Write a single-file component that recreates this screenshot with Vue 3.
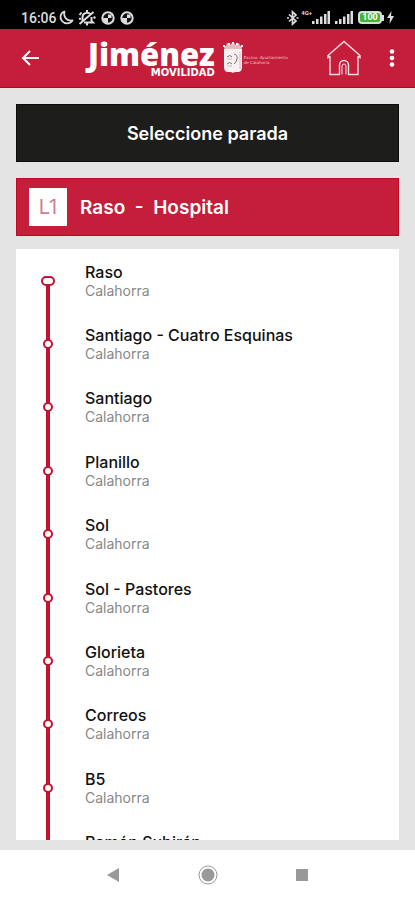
<script setup>
const stops = [
  'Raso',
  'Santiago - Cuatro Esquinas',
  'Santiago',
  'Planillo',
  'Sol',
  'Sol - Pastores',
  'Glorieta',
  'Correos',
  'B5',
  'Ramón Subirán'
]
</script>

<template>
  <div class="screen">
    <div class="status">
      <div class="group left">
        <span class="clock">16:06</span>
        <svg width="15" height="15" viewBox="0 0 15 15" fill="none" stroke="#ddd" stroke-width="1.8"><path d="M5.500 1.500C1 3 .5 8 3 11s7.500 3.500 10.500-.5C8 11.500 4 7 5.500 1.500Z" stroke-linejoin="round" /></svg>
        <svg class="bell" width="18" height="16" viewBox="0 0 18 16" fill="none" stroke="#ddd" stroke-width="2"><path d="M4.500 11V7.500a4.500 4.500 0 0 1 8-3M13.500 7v4l1.500 1.500H6M9 13v2.500M1.500 14 15.500 2M9 0v2.500M1.500 5l2-2.500M1 9l2-.5M15.500 7l2 1" /></svg>
        <svg class="dot" width="14" height="14" viewBox="0 0 14 14"><circle cx="7" cy="7" r="5.700" fill="#111" stroke="#ddd" stroke-width="2" /><path d="M7 7V3.500h3.500V7ZM2 7h5v5Q2 12 2 7Z" fill="#ddd" /></svg>
        <svg class="dot" width="14" height="14" viewBox="0 0 14 14"><circle cx="7" cy="7" r="5.700" fill="#111" stroke="#ddd" stroke-width="2" /><path d="M7 7V3.500h3.500V7ZM2 7h5v5Q2 12 2 7Z" fill="#ddd" /></svg>
      </div>
      <div class="group">
        <svg width="12" height="16" viewBox="0 0 12 16" fill="none" stroke="#ddd" stroke-width="1.700"><path d="M2 4.500 9 11l-3.500 3.200V1.800L9 5 2 11.500M0 8h2M9.500 8h2" /></svg>
        <span class="net">4G+</span>
        <svg width="18" height="13" viewBox="0 0 18 13" fill="#ddd"><path d="M0 10h2.500v3H0zM4 8h2.500v5H4zM8 5.500h2.500V13H8zM12 3h2.500v10H12zM15.500 0H18v13h-2.500z" /></svg>
        <svg class="sim" width="18" height="13" viewBox="0 0 18 13" fill="#ddd"><path d="M0 10h2.500v3H0zM4 8h2.500v5H4zM8 5.500h2.500V13H8zM12 3h2.500v10H12zM15.500 0H18v13h-2.500z" /></svg>
        <span class="battery">100</span>
        <svg class="cap" width="2" height="6" viewBox="0 0 2 6"><path d="M0 0h2v6H0Z" fill="#ddd" /></svg>
        <svg class="bolt" width="7" height="13" viewBox="0 0 7 13" fill="#ddd"><path d="M4.500 0 0 7h3l-.5 6L7 5H4z" /></svg>
      </div>
    </div>

    <header class="bar">
      <button class="icon" type="button" aria-label="Volver">
        <svg width="20" height="18" viewBox="0 0 20 18" fill="none" stroke="#fff" stroke-width="2"><path d="M19 9H3M10 2 3 9l7 7" /></svg>
      </button>
      <div class="brand">
        <span class="name">Jiménez</span>
        <span class="tag">MOVILIDAD</span>
      </div>
      <div class="council">
        <svg width="22" height="32" viewBox="0 0 22 32">
          <path d="M3 8 1 3l3 1 1-3 3 2 3-3 3 3 3-2 1 3 3-1-2 5Z" fill="#e9b9c1" />
          <path d="M1 4h2M6 2h2M10 1h2M14 2h2M19 4h2" stroke="#fff" stroke-width="2" />
          <path d="M2 7h18v18q0 5-4 5h-3l-2 1-2-1H6q-4 0-4-5Z" fill="#f7f1f2" />
          <path d="M5 15q3-3 5 0M5 22q3-3 5 0M12 12q4 1 3 5-1 4-3 5" fill="none" stroke="#776b6d" />
          <path d="M5 17h5M5 24h5M18 10v17" stroke="#c9bfc1" />
        </svg>
        <span class="council-name">Excmo. Ayuntamiento<br>de Calahorra</span>
      </div>
      <button class="icon home" type="button" aria-label="Inicio">
        <svg width="34" height="36" viewBox="0 0 34 36" fill="none" stroke="#fbdfe3" stroke-width="1.400"><path d="M3 16v18.500h9.500V25a4.500 4.500 0 0 1 9 0v9.500H31V16M3 16l-2 1.500V15.500L17 1.500 33 15.500v2L31 16" /><path d="M15 34.500V26a2 2 0 0 1 4 0v8.500" stroke-width="1" /></svg>
      </button>
      <button class="icon more" type="button" aria-label="Más opciones">
        <svg width="6" height="18" viewBox="0 0 6 18" fill="#fff"><circle cx="3" cy="2.500" r="2.300" /><circle cx="3" cy="9" r="2.300" /><circle cx="3" cy="15.500" r="2.300" /></svg>
      </button>
    </header>

    <main class="content">
      <h1 class="title">Seleccione parada</h1>
      <h2 class="route">
        <span class="badge">L1</span>
        <span class="route-name">Raso&nbsp; -&nbsp; Hospital</span>
      </h2>
      <div class="panel">
        <ol class="stops">
          <li v-for="stop in stops" :key="stop" class="stop">
            <span class="track"><span class="node"></span></span>
            <a class="label" href="#">
              <span class="stop-name">{{ stop }}</span>
              <span class="town">Calahorra</span>
            </a>
          </li>
        </ol>
      </div>
    </main>

    <nav class="system">
      <button class="icon" type="button" aria-label="Atrás">
        <svg width="14" height="16" viewBox="0 0 14 16"><path d="M13 1v14L1 8Z" fill="#999" /></svg>
      </button>
      <button class="icon" type="button" aria-label="Pantalla de inicio">
        <svg width="20" height="20" viewBox="0 0 20 20"><circle cx="10" cy="10" r="9" fill="none" stroke="#999" /><circle cx="10" cy="10" r="6.500" fill="#999" /></svg>
      </button>
      <button class="icon" type="button" aria-label="Recientes">
        <svg width="14" height="14" viewBox="0 0 14 14"><path d="M1 1h12v12H1Z" fill="#999" /></svg>
      </button>
    </nav>
  </div>
</template>

<style>
body {
  margin: 0;
}
</style>

<style scoped>
.screen {
  display: flex;
  flex-direction: column;
  height: 100vh;
  background: #e4e4e4;
  font-family: Inter, "Liberation Sans", sans-serif;
}

.status {
  display: flex;
  justify-content: space-between;
  align-items: flex-end;
  box-sizing: border-box;
  height: 29px;
  padding: 0 21px 3px;
  background: #000;
  color: #ddd;
}

.group {
  display: flex;
  align-items: center;
  height: 17px;
}

.clock {
  margin-right: 2px;
  font: 500 14px/16px Roboto, sans-serif;
}

.bell {
  margin-left: 4px;
}

.dot {
  margin-left: 5px;
}

.net {
  align-self: flex-start;
  margin-left: 2px;
  font: 700 6px/8px Roboto, sans-serif;
}

.sim {
  margin-left: 5px;
}

.battery {
  box-sizing: border-box;
  width: 24px;
  height: 13px;
  margin-left: 5px;
  border: 2px solid #ddd;
  border-radius: 4px;
  background: #43b52f;
  color: #fff;
  font: 700 9px/9px Roboto, sans-serif;
  text-align: center;
}

.bolt {
  margin-left: 3px;
}

.bar {
  display: flex;
  align-items: center;
  box-sizing: border-box;
  height: 59px;
  padding: 0 20px;
  border-bottom: 1px solid #b80820;
  background: #c41e3a;
}

.icon {
  display: flex;
  padding: 0;
  border: 0;
  background: none;
}

.brand {
  display: flex;
  flex-direction: column;
  align-items: flex-end;
  margin-left: 48px;
  color: #fff;
}

.name {
  font: 800 31px/30px "Open Sans", sans-serif;
}

.tag {
  font: 700 10px/8px "DejaVu Sans", sans-serif;
}

.council {
  display: flex;
  align-items: center;
  margin-left: 7px;
}

.council-name {
  color: #f0c4cb;
  font: 400 4px/5px "DejaVu Sans", sans-serif;
  white-space: nowrap;
}

.council-name {
  padding-top: 4px;
}

.home {
  margin-left: auto;
}

.more {
  margin-left: 28px;
}

.content {
  display: flex;
  flex: 1;
  flex-direction: column;
  min-height: 0;
  padding: 16px 16px 10px;
}

.title,
.route {
  display: flex;
  flex-shrink: 0;
  align-items: center;
  box-sizing: border-box;
  height: 58px;
  margin: 0;
  color: #fff;
  font-size: 18px;
  font-weight: 600;
}

.title {
  justify-content: center;
  border: 1px solid #0c0c0b;
  background: #1d1d1b;
}

.route {
  gap: 13px;
  margin: 16px 0 13px;
  padding: 0 12px;
  border: 1px solid #c00a24;
  background: #c41e3a;
  font-size: 19px;
}

.badge {
  width: 38px;
  background: #fff;
  color: #cf7f8d;
  font-size: 20px;
  font-weight: 400;
  line-height: 38px;
  text-align: center;
}

.panel {
  flex: 1;
  min-height: 0;
  overflow: hidden;
  background: #fff;
}

.stops {
  display: grid;
  grid-auto-rows: 1fr;
  min-height: 634px;
  margin: 0;
  padding: 0;
  background: linear-gradient(#c4122f, #c4122f) 30px 0 / 4px 100% no-repeat;
  list-style: none;
}

.stop {
  display: flex;
  align-items: center;
}

.track {
  display: flex;
  align-items: center;
  justify-content: center;
  align-self: stretch;
  width: 64px;
}

.stop:first-child .track {
  background: linear-gradient(#fff 50%, transparent 50%);
}

.node {
  box-sizing: border-box;
  width: 10px;
  height: 10px;
  border: 2px solid #c4122f;
  border-radius: 5px;
  background: #fff;
}

.stop:first-child .node {
  width: 14px;
}

.label {
  display: flex;
  flex-direction: column;
  padding-left: 5px;
  color: #111;
  text-decoration: none;
}

.stop-name {
  font-size: 16px;
  font-weight: 500;
  line-height: 20px;
}

.town {
  color: #888;
  font-size: 14px;
  line-height: 18px;
}

.system {
  display: flex;
  align-items: center;
  justify-content: space-between;
  height: 50px;
  padding: 0 106px;
  background: #fff;
}
</style>
